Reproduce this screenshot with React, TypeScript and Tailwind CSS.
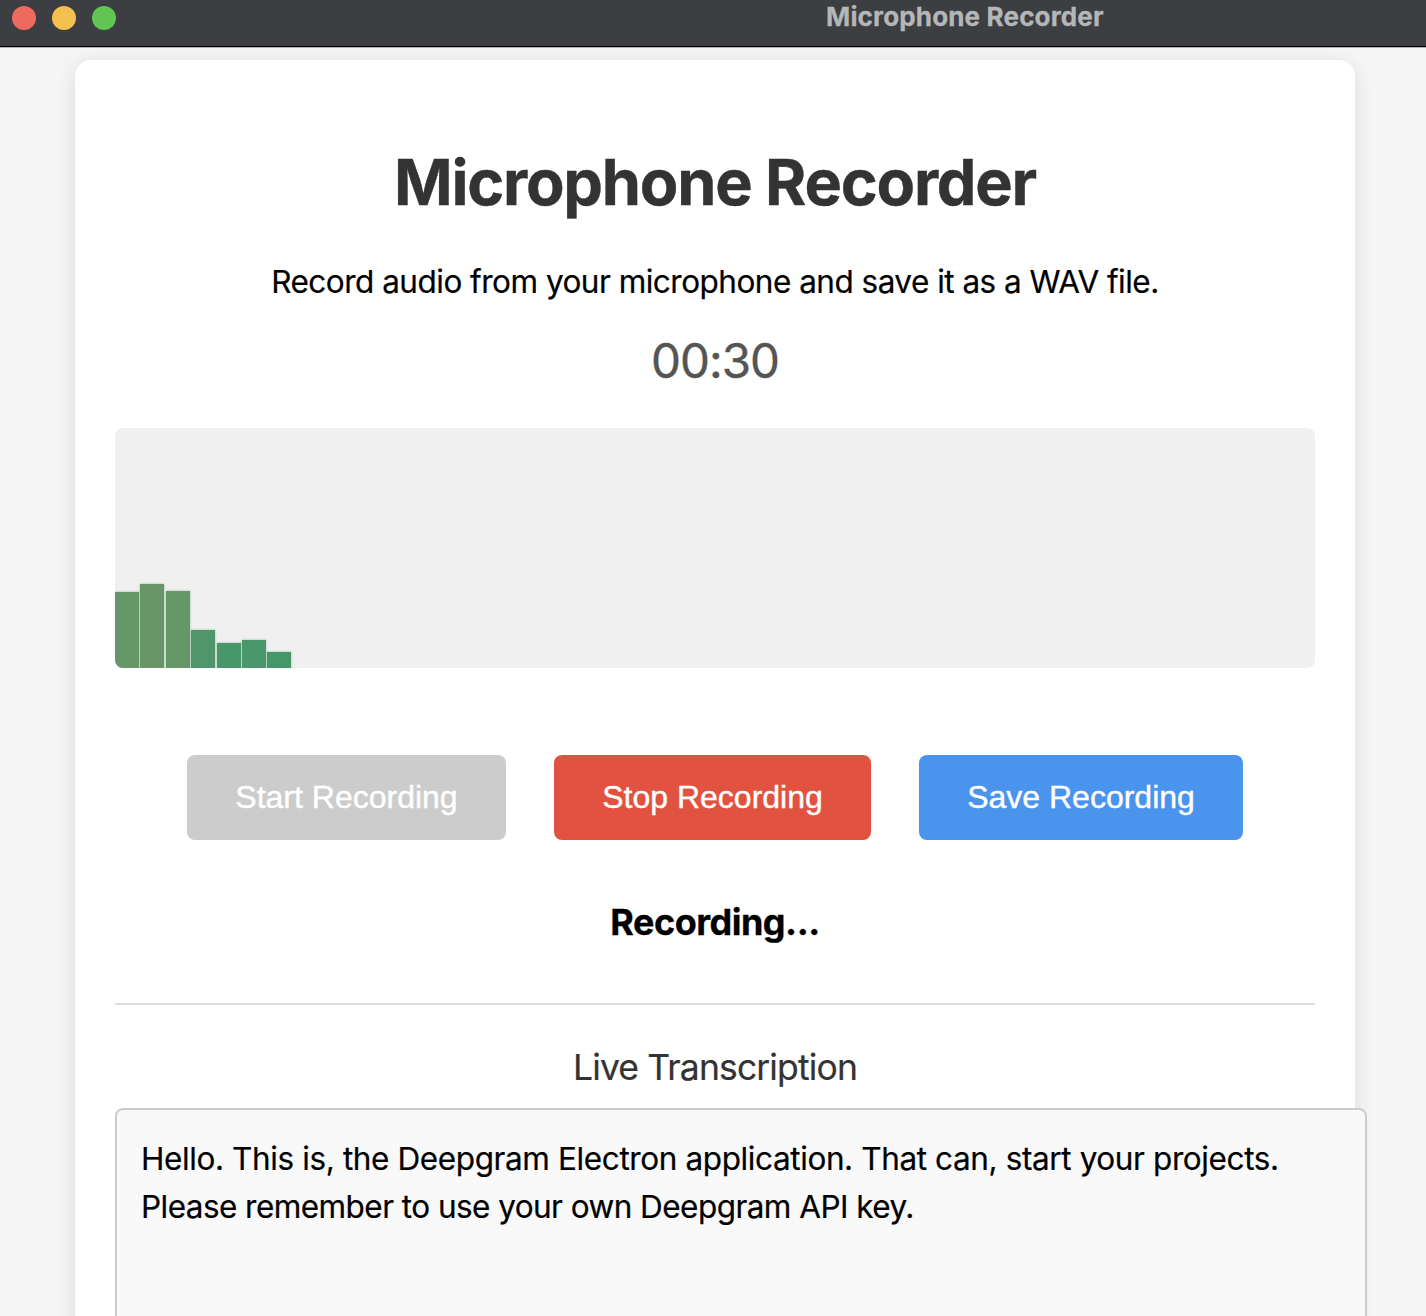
const bars = [
  { h: 76, c: '#669769' },
  { h: 84.5, c: '#689668' },
  { h: 77, c: '#669769' },
  { h: 38.5, c: '#4f976a' },
  { h: 25.5, c: '#48976a' },
  { h: 28, c: '#49976a' },
  { h: 16, c: '#459769' },
];

export default function App() {
  return (
    <div className="flex h-[1316px] w-[1426px] flex-col overflow-hidden bg-[#f5f5f5] font-['Inter',sans-serif] text-black">
      <header className="flex h-[47px] shrink-0 border-b border-black bg-[#3d3e42] pl-3 shadow-[0_1px_0_#b4b4b4]">
        <div className="flex gap-4 pt-1.5">
          <span className="size-6 rounded-full bg-[#ed6a5e]" />
          <span className="size-6 rounded-full bg-[#f5bf4f]" />
          <span className="size-6 rounded-full bg-[#61c554]" />
        </div>
        <div className="ml-[710px] pt-0.5 text-[26px] leading-[30px] font-bold tracking-[0.16px] whitespace-nowrap text-[#b5b6b8] [-webkit-text-stroke:0.3px]">Microphone Recorder</div>
      </header>
      <main className="mt-[13px] ml-[75px] flex h-[1400px] w-[1280px] shrink-0 flex-col rounded-2xl bg-white px-10 text-center shadow-[0_4px_20px_rgba(0,0,0,0.1)]">
        <h1 className="mt-[84px] text-[63px] leading-[76px] font-bold tracking-[-1.25px] whitespace-nowrap text-[#333] [-webkit-text-stroke:0.4px]">Microphone Recorder</h1>
        <p className="mt-[43px] text-[31.5px] leading-[38px] tracking-[-0.51px] whitespace-nowrap [-webkit-text-stroke:0.2px]">Record audio from your microphone and save it as a WAV file.</p>
        <div className="mt-[32px] text-[47.5px] leading-[56px] tracking-[-1px] text-[#555] [-webkit-text-stroke:0.4px]">00:30</div>
        <div className="mt-[39px] flex h-[240px] shrink-0 items-end gap-[1.4px] overflow-hidden rounded-lg bg-[#f0f0f0]">
          {bars.map((b, i) => (
            <div key={i} className="w-[24px] shadow-[0_0_2px_rgba(80,151,105,0.6)]" style={{ height: b.h, backgroundColor: b.c }} />
          ))}
        </div>
        <div className="mt-[87px] flex justify-center gap-12 font-['Liberation_Sans',Arial,sans-serif] text-[32px] leading-[37px] whitespace-nowrap text-white [-webkit-text-stroke:0.4px]">
          <button className="h-[85px] w-[319px] rounded-lg bg-[#ccc]">Start Recording</button>
          <button className="h-[85px] w-[317px] rounded-lg bg-[#e15241]">Stop Recording</button>
          <button className="h-[85px] w-[324px] rounded-lg bg-[#4a94ee]">Save Recording</button>
        </div>
        <div className="mt-[60px] text-[36px] leading-[44px] font-bold tracking-[-0.5px] [-webkit-text-stroke:0.3px]">Recording...</div>
        <hr className="mt-[59px] border-t-2 border-[#ddd]" />
        <h2 className="mt-[42px] text-[35.5px] leading-[42px] tracking-[-0.86px] text-[#333] [-webkit-text-stroke:0.2px]">Live Transcription</h2>
        <div className="mt-[19px] h-[400px] w-[1252px] shrink-0 rounded-lg border-2 border-[#ccc] bg-[#f9f9f9] px-6 pt-[25px] text-left text-[31.5px] leading-[48px] whitespace-nowrap [-webkit-text-stroke:0.2px]">
          <p className="tracking-[-0.39px]">Hello. This is, the Deepgram Electron application. That can, start your projects.</p>
          <p className="tracking-[-0.55px]">Please remember to use your own Deepgram API key.</p>
        </div>
      </main>
    </div>
  );
}
